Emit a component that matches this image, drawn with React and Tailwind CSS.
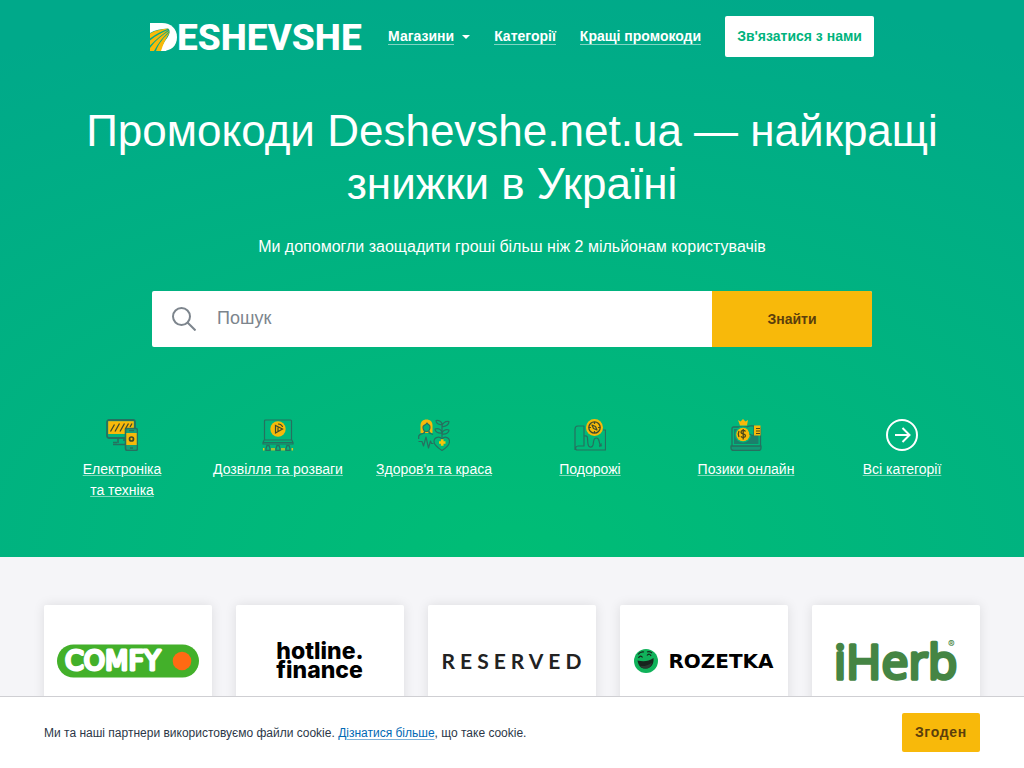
const categories = [
  { name: "Електроніка та техніка", Icon: ElectronicsIcon },
  { name: "Дозвілля та розваги", Icon: LeisureIcon },
  { name: "Здоров'я та краса", Icon: HealthIcon },
  { name: "Подорожі", Icon: TravelIcon },
  { name: "Позики онлайн", Icon: LoansIcon },
  { name: "Всі категорії", Icon: AllIcon },
];

const shops = [
  { name: "Comfy", Logo: ComfyLogo },
  { name: "Hotline Finance", Logo: HotlineLogo },
  { name: "Reserved", Logo: ReservedLogo },
  { name: "Rozetka", Logo: RozetkaLogo },
  { name: "iHerb", Logo: IHerbLogo },
];

function ElectronicsIcon() {
  return (
    <svg width="32" height="32" viewBox="0 0 32 32" fill="none" stroke="#26705f" strokeWidth="1.3" aria-hidden="true">
      <rect x="1" y="1" width="28" height="18" rx="2" strokeWidth="1.8" />
      <rect x="2.2" y="2.2" width="25.6" height="12.8" fill="#f8b90a" stroke="none" />
      <path d="M4.500 12.500l4-7M9 12.500l4.500-8M14 12.500l4.500-8M19 10.500l3.500-6M24 8l2-3.500" stroke="#3f4a2a" />
      <path d="M12 19v5M18 19v3M7 25.500h12M7 23.500h4" strokeWidth="1.600" />
      <rect x="19.500" y="9.500" width="12" height="22" rx="2" fill="#16a077" strokeWidth="1.600" />
      <rect x="20.300" y="14" width="10.400" height="12" fill="#f8b90a" stroke="none" />
      <circle cx="25.500" cy="20" r="2" stroke="#3f4a2a" strokeWidth="1.700" />
      <path d="M23 11.700h5M24 29h3" />
    </svg>
  );
}

function LeisureIcon() {
  return (
    <svg width="32" height="32" viewBox="0 0 32 32" fill="none" stroke="#26705f" strokeWidth="1.2" aria-hidden="true">
      <rect x="2.500" y="1" width="27" height="20" rx="1" />
      <path d="M2.500 20.500L1 23.500V25h30v-1.500l-1.500-3" />
      <path d="M1 23.500h30" />
      <circle cx="16" cy="10" r="7.700" fill="#f8b90a" stroke="none" />
      <path d="M13.500 6.500v7.500l7-4zM16 8.500v3.500" stroke="#3f4a2a" />
      <path d="M16 5c3 0 4.500 2 4.500 3" stroke="#3f4a2a" />
      <path d="M4 31.500v-2l1-3h2l1 3v2zM14 31.500v-2l1-3h2l1 3v2zM24 31.500v-2l1-3h2l1 3v2z" strokeWidth="1.300" />
      <path d="M1.700 29v2.500M10 29v2.500M12 29v2.500M20 29v2.500M22 29v2.500M30.300 29v2.500" stroke="#e5c51a" strokeWidth="1.500" />
    </svg>
  );
}

function HealthIcon() {
  return (
    <svg width="32" height="32" viewBox="0 0 32 32" fill="none" stroke="#26705f" strokeWidth="1.200" strokeLinejoin="round" aria-hidden="true">
      <path d="M2.500 14V6.500C2.500 2.500 5 .5 8.500.5s6 2 6 6V14z" fill="#f8b90a" stroke="none" />
      <path d="M5 8c0-2 2-1 4-4 1 2 3 1.500 3 4s-1 4.500-3.500 4.500S5 10.500 5 8z" fill="#00b57c" />
      <path d="M6.500 12v2L2 15.500.700 17v3M11 12v2l4 1.500" fill="#00b57c" />
      <path d="M.5 22.500H4L5.500 27 8 18l2.500 11 2-7 1 2.500h2" />
      <path d="M24 31.500c-4-2.500-8-5.500-8-9 0-5 6.500-5.500 8-2 1.500-3.500 7.500-3 7.500 2 0 3.500-3.500 6.500-7.500 9z" />
      <path d="M24 19V4M24 15c0-3 3-5 7-4 0 3-3 4.500-7 4zM24 14c0-3-3-5-7-4 0 3 3 4.500 7 4zM24 7.500c0-3 3-5.500 7-5 0 3-3 5.500-7 5zM24 5.500c0-3-3-4.500-6-4 0 3 3 4.500 6 4z" />
      <path d="M21 23.500h6.500M24.200 20.300v6.500" stroke="#f8c60a" strokeWidth="2.700" />
    </svg>
  );
}

function TravelIcon() {
  return (
    <svg width="32" height="32" viewBox="0 0 32 32" fill="none" stroke="#26705f" strokeWidth="1.200" strokeLinejoin="round" aria-hidden="true">
      <path d="M1 31V10c0-3 3-3 3-3h6v20H4c-3 0-3 4-1 4h28.500V11H29" />
      <path d="M10 17c5-1 3 3 4 8 .5 4 4 4 5 1 1-4 0-7 3.500-7s2 5 4 7" />
      <path d="M25 26l3 1M27.500 24.500l-2 3.500" />
      <circle cx="20.500" cy="8.500" r="8.500" fill="#f8b90a" stroke="none" />
      <circle cx="20.500" cy="8.500" r="5.700" stroke="#3f4a2a" strokeWidth="1.300" />
      <path d="M18 6l3.500 1.500L23 11l-3.500-1.500zM20.500 3v2M20.500 12v2M15 8.500h2M24 8.500h2" stroke="#3f4a2a" />
    </svg>
  );
}

function LoansIcon() {
  return (
    <svg width="32" height="32" viewBox="0 0 32 32" fill="none" stroke="#26705f" strokeWidth="1.300" strokeLinejoin="round" aria-hidden="true">
      <rect x="2" y="8" width="28.500" height="20" rx="1.500" />
      <rect x="4" y="10" width="24.500" height="15" fill="#1b7f6b" stroke="none" />
      <path d="M1 27h30v2c0 1.500-1 2.500-2.500 2.500h-25C2 31.500 1 30.500 1 29z" fill="#139a77" />
      <circle cx="13" cy="15.500" r="8" fill="#00b57c" stroke="none" />
      <path d="M8 1l2.500 1.500L13 0l2.500 2.500L18 1l-1 5.500h-7z" fill="#f8b90a" stroke="none" />
      <circle cx="13" cy="15.500" r="6.800" fill="#f8b90a" stroke="none" />
      <path d="M15.500 12.500c-1-1.500-4.500-1.500-4.500.7s4.500 1.300 4.500 3.600c0 2-3.500 2.200-4.500.5M13.200 10v10.500M9 12c-1 2-1 4 0 6" stroke="#4b4719" />
      <path d="M17 8c3-2 4.500-1 7-1v9c-2 1-3 0-4.500-1" fill="#00b57c" />
      <rect x="24" y="6.500" width="6.500" height="10" fill="#f8b90a" stroke="none" />
      <path d="M26 9.500h4M26 12h4M26 14.500h4" stroke="#4b4719" strokeWidth="1" />
    </svg>
  );
}

function AllIcon() {
  return (
    <svg width="32" height="32" viewBox="0 0 32 32" fill="none" stroke="#fff" strokeWidth="2" aria-hidden="true">
      <circle cx="16" cy="16" r="15" />
      <path d="M9 16h14M16.500 9l7 7-7 7" />
    </svg>
  );
}

function SiteLogo() {
  return (
    <svg width="212" height="30" viewBox="0 0 212 30" className="overflow-visible" role="img" aria-label="Deshevshe">
      <path d="M0 1h12c9 0 15 6 15 14 0 9-6 14-15 14H0z" fill="#fff" />
      <path d="M0 11c5-3 11-4 18-4.500 2 1 2 4 1 6C16 20 12 25 7 29H0z" fill="#00a989" />
      <path d="M11 29c1-7 5-12 9-16l2 3-6 13z" fill="#fff" />
      <path d="M0 11.500C6 8 12 7 19 6.500 13 8.500 6 12 0 16.500zM0 18.500c6-5 12-8 19-11C13 12 6 17 0 23.500zM0 26C6 18 12 13 20 8.500 14 14 8 21 4 29H0zM6 29c3-8 8-14 14-19-4 6-7 12-9 19z" fill="#f8b90a" />
      <text x="27" y="28" fill="#fff" fontFamily="Roboto, sans-serif" fontWeight="800" fontSize="37">ESHEVSHE</text>
    </svg>
  );
}

function ComfyLogo() {
  return (
    <svg width="142" height="34" viewBox="0 0 142 34" className="overflow-visible" aria-hidden="true">
      <rect width="142" height="33" y=".5" rx="16.500" fill="#43b02a" />
      <text x="8" y="26" fill="#fff" stroke="#fff" strokeWidth="3" strokeLinejoin="round" fontFamily="'DejaVu Sans', sans-serif" fontWeight="400" fontSize="27">COMFY</text>
      <circle cx="125" cy="17" r="9.300" fill="#ff6a13" />
    </svg>
  );
}

function HotlineLogo() {
  return (
    <span className="font-[Inter,sans-serif] text-[23px] leading-[19px] font-extrabold text-black">
      hotline.
      <br />
      finance
    </span>
  );
}

function ReservedLogo() {
  return <span className="pl-1 font-[Lato,sans-serif] text-[21px] leading-6 font-bold tracking-[5px] text-[#222]">RESERVED</span>;
}

function RozetkaLogo() {
  return (
    <span className="flex items-center gap-2.5">
      <svg width="24" height="24" viewBox="0 0 24 24" aria-hidden="true">
        <circle cx="12" cy="12" r="12" fill="#10b25a" />
        <path d="M3.500 11.500c6 1.500 11 1 16-2.500.5 6-2 10-7.500 10.500-4.500.5-7.500-2-8.500-8z" fill="#17251d" />
        <path d="M6 17c4 .5 8-.5 12-3.500-1 4-3 6-6 6s-5-1-6-2.500z" fill="#293b32" />
        <path d="M4.500 9c1-2.500 3-2.500 4-.5M13 6.500c1.500-2 3.500-1.500 4 .5M4 5.500C6 3 8 2.500 10 3M13 3c2-1 4 0 5 1" stroke="#17251d" strokeWidth="1.200" fill="none" />
      </svg>
      <span className="font-['DejaVu_Sans',sans-serif] text-[20px] leading-6 font-bold text-black">ROZETKA</span>
    </span>
  );
}

function IHerbLogo() {
  return (
    <svg width="124" height="68" viewBox="0 -12 124 68" className="overflow-visible" aria-hidden="true">
      <text x="0" y="40" fill="#458544" stroke="#458544" strokeWidth="3.5" strokeLinejoin="round" fontFamily="'Open Sans', sans-serif" fontWeight="500" fontSize="48">iHerb</text>
      <text x="114" y="9" fill="#458544" fontFamily="Inter, sans-serif" fontWeight="600" fontSize="10">®</text>
    </svg>
  );
}

function NavLink({ children }) {
  return (
    <a href="#" className="border-b border-white/50 text-sm leading-[15px] font-bold text-white">
      {children}
    </a>
  );
}

export default function App() {
  return (
    <div className="min-h-screen bg-[#f5f5f8] font-['Liberation_Sans',Arial,sans-serif] text-[#212529]">
      <div className="bg-[radial-gradient(100%_105%_at_bottom,#00bd75_0%,#00a98a_100%)] px-11 pt-4 pb-14 text-white">
        <header className="flex items-center justify-center">
          <a href="#" className="mr-[26px]">
            <SiteLogo />
          </a>
          <nav className="flex items-center gap-6">
            <span className="flex items-center gap-2">
              <NavLink>Магазини</NavLink>
              <span className="border-x-4 border-t-4 border-x-transparent border-t-white" />
            </span>
            <NavLink>Категорії</NavLink>
            <NavLink>Кращі промокоди</NavLink>
            <a href="#" className="rounded-xs bg-white px-3 py-2.5 text-sm leading-[21px] font-bold text-[#00b37d]">
              Зв'язатися з нами
            </a>
          </nav>
        </header>

        <h1 className="mt-[47px] text-center text-[44px] leading-[53px]">
          Промокоди Deshevshe.net.ua — найкращі знижки в Україні
        </h1>
        <p className="mt-[25px] text-center text-base">Ми допомогли заощадити гроші більш ніж 2 мільйонам користувачів</p>

        <form onSubmit={(e) => e.preventDefault()} className="mx-auto mt-8 flex h-14 max-w-[720px] overflow-hidden rounded-xs bg-white">
          <label htmlFor="search" className="flex items-center pl-5">
            <svg width="24" height="24" viewBox="0 0 24 24" fill="none" stroke="#7d858d" strokeWidth="2" aria-label="Пошук">
              <circle cx="9.500" cy="9.500" r="8.500" />
              <path d="M15.500 15.500l8 8" />
            </svg>
          </label>
          <input id="search" type="text" placeholder="Пошук" className="min-w-0 flex-1 pb-0.5 pl-[21px] text-lg text-[#212529] outline-none placeholder:text-[#7d858d]" />
          <button type="submit" className="w-40 bg-[#f8b90a] text-sm font-bold text-[#5b3f0c]">
            Знайти
          </button>
        </form>

        <ul className="mt-[72px] grid grid-cols-6">
          {categories.map(({ name, Icon }) => (
            <li key={name} className="h-[82px]">
              <a href="#" className="flex flex-col items-center gap-2 text-center text-sm leading-[21px]">
                <Icon />
                <span className={name.length > 20 ? "w-24" : "whitespace-nowrap"}>
                  <span className="underline decoration-white/50 decoration-1 underline-offset-1">{name}</span>
                </span>
              </a>
            </li>
          ))}
        </ul>
      </div>

      <main className="grid grid-cols-5 gap-6 px-11 py-12">
        {shops.map(({ name, Logo }) => (
          <a key={name} href="#" aria-label={name} className="flex h-28 items-center justify-center rounded-xs bg-white shadow-[0_0_12px_rgba(0,0,0,0.1)]">
            <Logo />
          </a>
        ))}
      </main>

      <div className="fixed inset-x-0 bottom-0 flex items-center justify-between border-t border-[#cfcfd3] bg-white px-11 py-4">
        <p className="text-xs text-[#2b3747]">
          Ми та наші партнери використовуємо файли cookie.{" "}
          <a href="#" className="text-[#0069b4] underline decoration-[#0069b4]/50 underline-offset-2">
            Дізнатися більше
          </a>
          , що таке cookie.
        </p>
        <button type="button" className="rounded-xs bg-[#f8b90a] px-[13px] py-[9px] text-sm leading-[21px] font-bold tracking-wider text-[#5b3f0c]">
          Згоден
        </button>
      </div>
    </div>
  );
}
